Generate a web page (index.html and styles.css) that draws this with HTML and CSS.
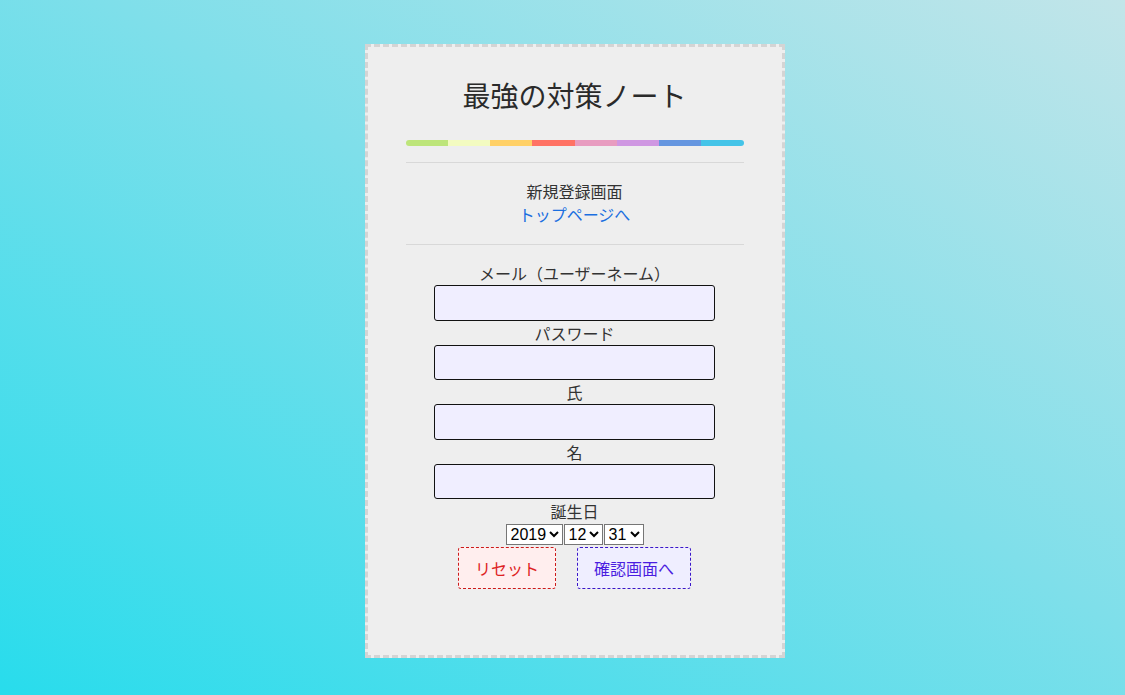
FILE: index.html
```html
<!DOCTYPE html>
<html lang="ja">
<head>
<meta charset="utf-8">
<title>最強の対策ノート</title>
<link rel="stylesheet" href="styles.css">
</head>
<body>
<div class="page">
  <div class="card">
    <h1 class="title">最強の対策ノート</h1>
    <div class="rainbow">
      <span class="c1"></span><span class="c2"></span><span class="c3"></span><span class="c4"></span><span class="c5"></span><span class="c6"></span><span class="c7"></span><span class="c8"></span>
    </div>
    <hr class="rule rule-top">
    <div class="sub">
      <div class="sub-title">新規登録画面</div>
      <a class="sub-link" href="#">トップページへ</a>
    </div>
    <hr class="rule rule-bottom">
    <form class="form">
      <label class="label">メール（ユーザーネーム）</label>
      <input class="field" type="text">
      <label class="label">パスワード</label>
      <input class="field" type="password">
      <label class="label">氏</label>
      <input class="field" type="text">
      <label class="label">名</label>
      <input class="field" type="text">
      <label class="label">誕生日</label>
      <div class="dates">
        <select class="sel sel-year"><option>2019</option></select><select class="sel sel-month"><option>12</option></select><select class="sel sel-day"><option>31</option></select>
      </div>
      <div class="buttons">
        <button class="btn btn-reset" type="button">リセット</button>
        <button class="btn btn-confirm" type="button">確認画面へ</button>
      </div>
    </form>
  </div>
</div>
</body>
</html>
```
FILE: styles.css
```css
html, body {
  margin: 0;
  padding: 0;
  height: 100%;
}
body {
  background: linear-gradient(to top right, #28dcec 0%, #7fdfea 55%, #c2e5e9 100%);
  font-family: "Noto Sans CJK JP", "Liberation Sans", sans-serif;
  color: #333;
}
.page {
  display: flex;
  justify-content: center;
  padding: 44px 0 0 24px;
}
.card {
  box-sizing: border-box;
  width: 420px;
  height: 614px;
  background: #eeeeee;
  border: 3px dashed #d4d4d4;
  padding: 0 38px;
  text-align: center;
}
.title {
  margin: 28px 0 0;
  font-size: 28px;
  font-weight: 400;
  line-height: 40px;
  color: #2a2a2a;
}
.rainbow {
  display: flex;
  height: 6px;
  margin-top: 25px;
  border-radius: 3px;
  overflow: hidden;
}
.rainbow span { flex: 1; }
.c1 { background: #bde57a; }
.c2 { background: #f3fbc0; }
.c3 { background: #ffd066; }
.c4 { background: #ff7264; }
.c5 { background: #e89cc0; }
.c6 { background: #cf97e2; }
.c7 { background: #6596e0; }
.c8 { background: #44c4e8; }
.rule {
  border: 0;
  height: 1px;
  background: #d8d8d8;
  margin: 0;
}
.rule-top { margin-top: 16px; }
.sub {
  padding: 17px 0 18px;
  font-size: 16px;
  line-height: 23px;
}
.sub-title { color: #333; }
.sub-link {
  color: #1a6fe0;
  text-decoration: none;
}
.form {
  display: flex;
  flex-direction: column;
  align-items: center;
  padding-top: 16px;
}
.label {
  font-size: 16px;
  line-height: 24px;
  color: #333;
}
.field {
  box-sizing: border-box;
  width: 281px;
  height: 35.5px;
  margin: 0;
  border: 1px solid #111;
  border-radius: 3px;
  background: #f0eeff;
}
.dates {
  display: flex;
  gap: 1px;
  margin-top: 1px;
}
.sel {
  box-sizing: border-box;
  font-family: "Liberation Sans", Arial, sans-serif;
  font-size: 16px;
  height: 21px;
  background: #fff;
  color: #000;
  border: 1px solid #767676;
  border-radius: 0;
  padding: 0;
}
.sel-year { width: 57px; }
.sel-month { width: 39px; }
.sel-day { width: 40px; }
.buttons {
  display: flex;
  gap: 21px;
  margin-top: 2px;
}
.btn {
  box-sizing: border-box;
  height: 42px;
  font-family: "Noto Sans CJK JP", sans-serif;
  font-size: 16px;
  border-radius: 3px;
  padding: 0;
  cursor: pointer;
}
.btn-reset {
  width: 98px;
  border: 1px dashed #cc1a1a;
  background: #ffeeee;
  color: #dd2222;
}
.btn-confirm {
  width: 114px;
  border: 1px dashed #3a16c8;
  background: #efeeff;
  color: #4a1de0;
}
```
